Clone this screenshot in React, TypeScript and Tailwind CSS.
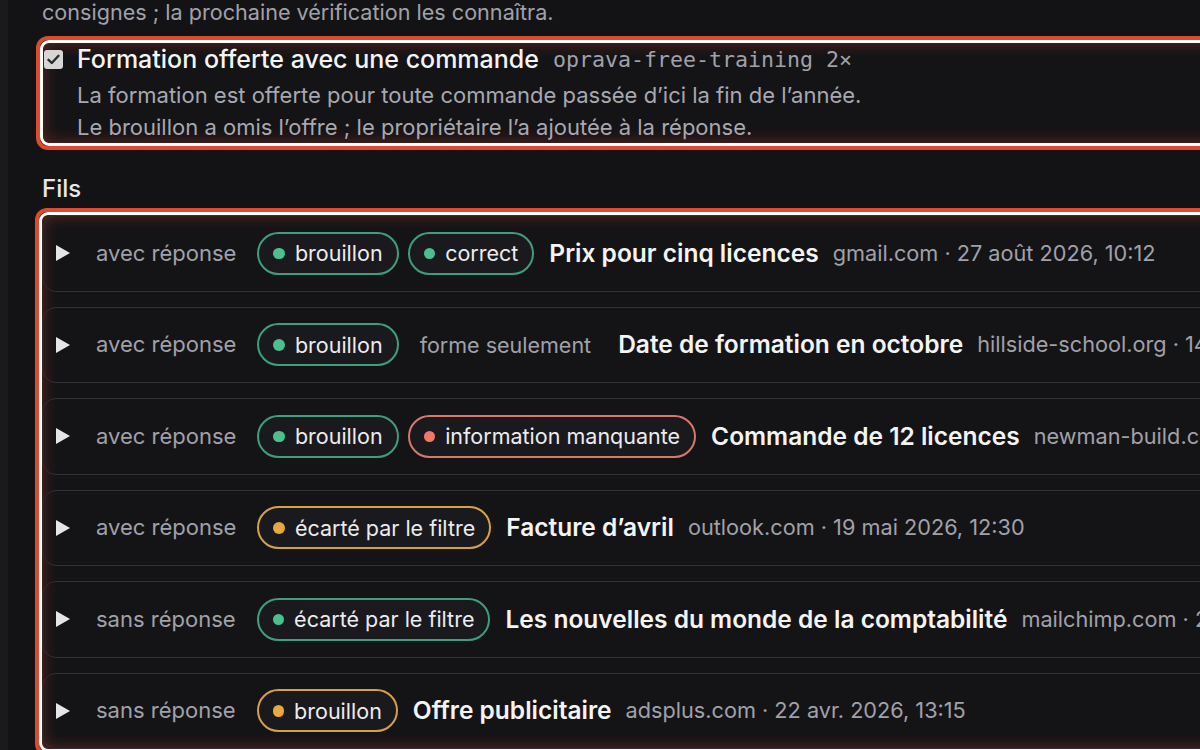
import React from 'react'

type Tone = 'green' | 'red' | 'amber' | 'plain'

type Pill = { label: string; tone: Tone }

type Thread = {
  state: string
  pills: Pill[]
  title: string
  meta: string
}

const THREADS: Thread[] = [
  {
    state: 'avec réponse',
    pills: [
      { label: 'brouillon', tone: 'green' },
      { label: 'correct', tone: 'green' },
    ],
    title: 'Prix pour cinq licences',
    meta: 'gmail.com · 27 août 2026, 10:12',
  },
  {
    state: 'avec réponse',
    pills: [
      { label: 'brouillon', tone: 'green' },
      { label: 'forme seulement', tone: 'plain' },
    ],
    title: 'Date de formation en octobre',
    meta: 'hillside-school.org · 14 sept.',
  },
  {
    state: 'avec réponse',
    pills: [
      { label: 'brouillon', tone: 'green' },
      { label: 'information manquante', tone: 'red' },
    ],
    title: 'Commande de 12 licences',
    meta: 'newman-build.com',
  },
  {
    state: 'avec réponse',
    pills: [{ label: 'écarté par le filtre', tone: 'amber' }],
    title: 'Facture d’avril',
    meta: 'outlook.com · 19 mai 2026, 12:30',
  },
  {
    state: 'sans réponse',
    pills: [{ label: 'écarté par le filtre', tone: 'green' }],
    title: 'Les nouvelles du monde de la comptabilité',
    meta: 'mailchimp.com · 2 mai',
  },
  {
    state: 'sans réponse',
    pills: [{ label: 'brouillon', tone: 'amber' }],
    title: 'Offre publicitaire',
    meta: 'adsplus.com · 22 avr. 2026, 13:15',
  },
]

const PILL_BORDER: Record<Tone, string> = {
  green: 'border-[#3f9e7b]',
  red: 'border-[#d9776c]',
  amber: 'border-[#d6a048]',
  plain: 'border-transparent',
}

const PILL_DOT: Record<Tone, string> = {
  green: 'bg-[#4cbf8e]',
  red: 'bg-[#f0786a]',
  amber: 'bg-[#e8a83e]',
  plain: '',
}

function StatusPill({ pill }: { pill: Pill }) {
  const plain = pill.tone === 'plain'
  return (
    <span
      className={`inline-flex h-[43px] shrink-0 items-center gap-[10px] rounded-full border-2 text-[21.5px] ${PILL_BORDER[pill.tone]} ${
        plain ? 'bg-transparent px-[10px] text-[#a1a1aa]' : 'bg-[#1a1a1e] px-[14px] text-[#ececee]'
      }`}
    >
      {plain ? null : <span className={`h-[11.5px] w-[11.5px] rounded-full ${PILL_DOT[pill.tone]}`} />}
      {pill.label}
    </span>
  )
}

function ThreadRow({ thread }: { thread: Thread }) {
  return (
    <div className="flex h-[76.5px] items-center whitespace-nowrap rounded-[14px] border border-[#2f2f35] pl-[13px]">
      {/* disclosure triangle */}
      <svg width="14" height="16" viewBox="0 0 14 16" className="shrink-0">
        <path d="M0 0 L14 8 L0 16 Z" fill="#e6e6e8" />
      </svg>
      <span className="ml-[26px] shrink-0 text-[22px] text-[#a1a1aa]">{thread.state}</span>
      <div className="ml-[21px] flex shrink-0 items-center gap-[9px]">
        {thread.pills.map((p, i) => (
          <StatusPill key={i} pill={p} />
        ))}
      </div>
      <span className="ml-[15px] shrink-0 text-[24.5px] font-semibold text-[#f4f4f5]">{thread.title}</span>
      <span className="ml-[14px] shrink-0 text-[21.7px] text-[#a1a1aa]">{thread.meta}</span>
    </div>
  )
}

function Highlight({ children, className = '' }: { children: React.ReactNode; className?: string }) {
  return (
    <div className={`rounded-[12px] border-4 border-[#dd4a2e] ${className}`}>
      <div className="overflow-hidden rounded-[9px] border-[3px] border-white bg-[#141417] shadow-[inset_0_0_16px_rgba(214,72,44,0.4)]">
        {children}
      </div>
    </div>
  )
}

export default function App() {
  return (
    <div
      className="flex h-[750px] w-[1200px] overflow-hidden bg-[#131316] text-[#e4e4e7]"
      style={{ fontFamily: 'Inter, "Noto Sans", sans-serif' }}
    >
      <div className="h-full w-[8px] shrink-0 bg-[#1a1a1d]" />
      <main className="w-[1320px] shrink-0 pl-[34px]">
        <p className="-mt-[4px] h-[32px] text-[21.6px] leading-[32px] text-[#a1a1aa]">
          consignes ; la prochaine vérification les connaîtra.
        </p>

        {/* Checked instruction */}
        <Highlight className="-ml-[6px] mt-[8px]">
          <div className="flex h-[100px] items-start">
            <div className="ml-[1px] mt-[7px] flex h-[19px] w-[19px] shrink-0 items-center justify-center rounded-[3px] bg-[#d6d6d6]">
              <svg width="13" height="11" viewBox="0 0 13 11">
                <path d="M1.5 5.8 L4.8 9 L11.5 1.8" stroke="#2b2b2b" strokeWidth="2.4" fill="none" strokeLinecap="round" strokeLinejoin="round" />
              </svg>
            </div>
            <div className="ml-[14px] whitespace-nowrap">
              <div className="flex h-[34px] items-center">
                <span className="text-[25px] font-medium text-[#f4f4f5]">Formation offerte avec une commande</span>
                <span
                  className="ml-[14px] text-[21.6px] text-[#a1a1aa]"
                  style={{ fontFamily: '"DejaVu Sans Mono", monospace' }}
                >
                  oprava-free-training 2×
                </span>
              </div>
              <p className="mt-[2px] text-[22px] leading-[32px] text-[#a8a8b0]">
                La formation est offerte pour toute commande passée d’ici la fin de l’année.
              </p>
              <p className="text-[22px] leading-[32px] text-[#a8a8b0]">
                Le brouillon a omis l’offre ; le propriétaire l’a ajoutée à la réponse.
              </p>
            </div>
          </div>
        </Highlight>

        <h3 className="mt-[24px] h-[30px] text-[24px] font-medium leading-[30px] text-[#e8e8ea]">Fils</h3>

        {/* Threads */}
        <Highlight className="-ml-[7px] mt-[4px]">
          <div className="flex flex-col gap-[15px]">
            {THREADS.map((t, i) => (
              <ThreadRow key={i} thread={t} />
            ))}
          </div>
        </Highlight>
      </main>
    </div>
  )
}
